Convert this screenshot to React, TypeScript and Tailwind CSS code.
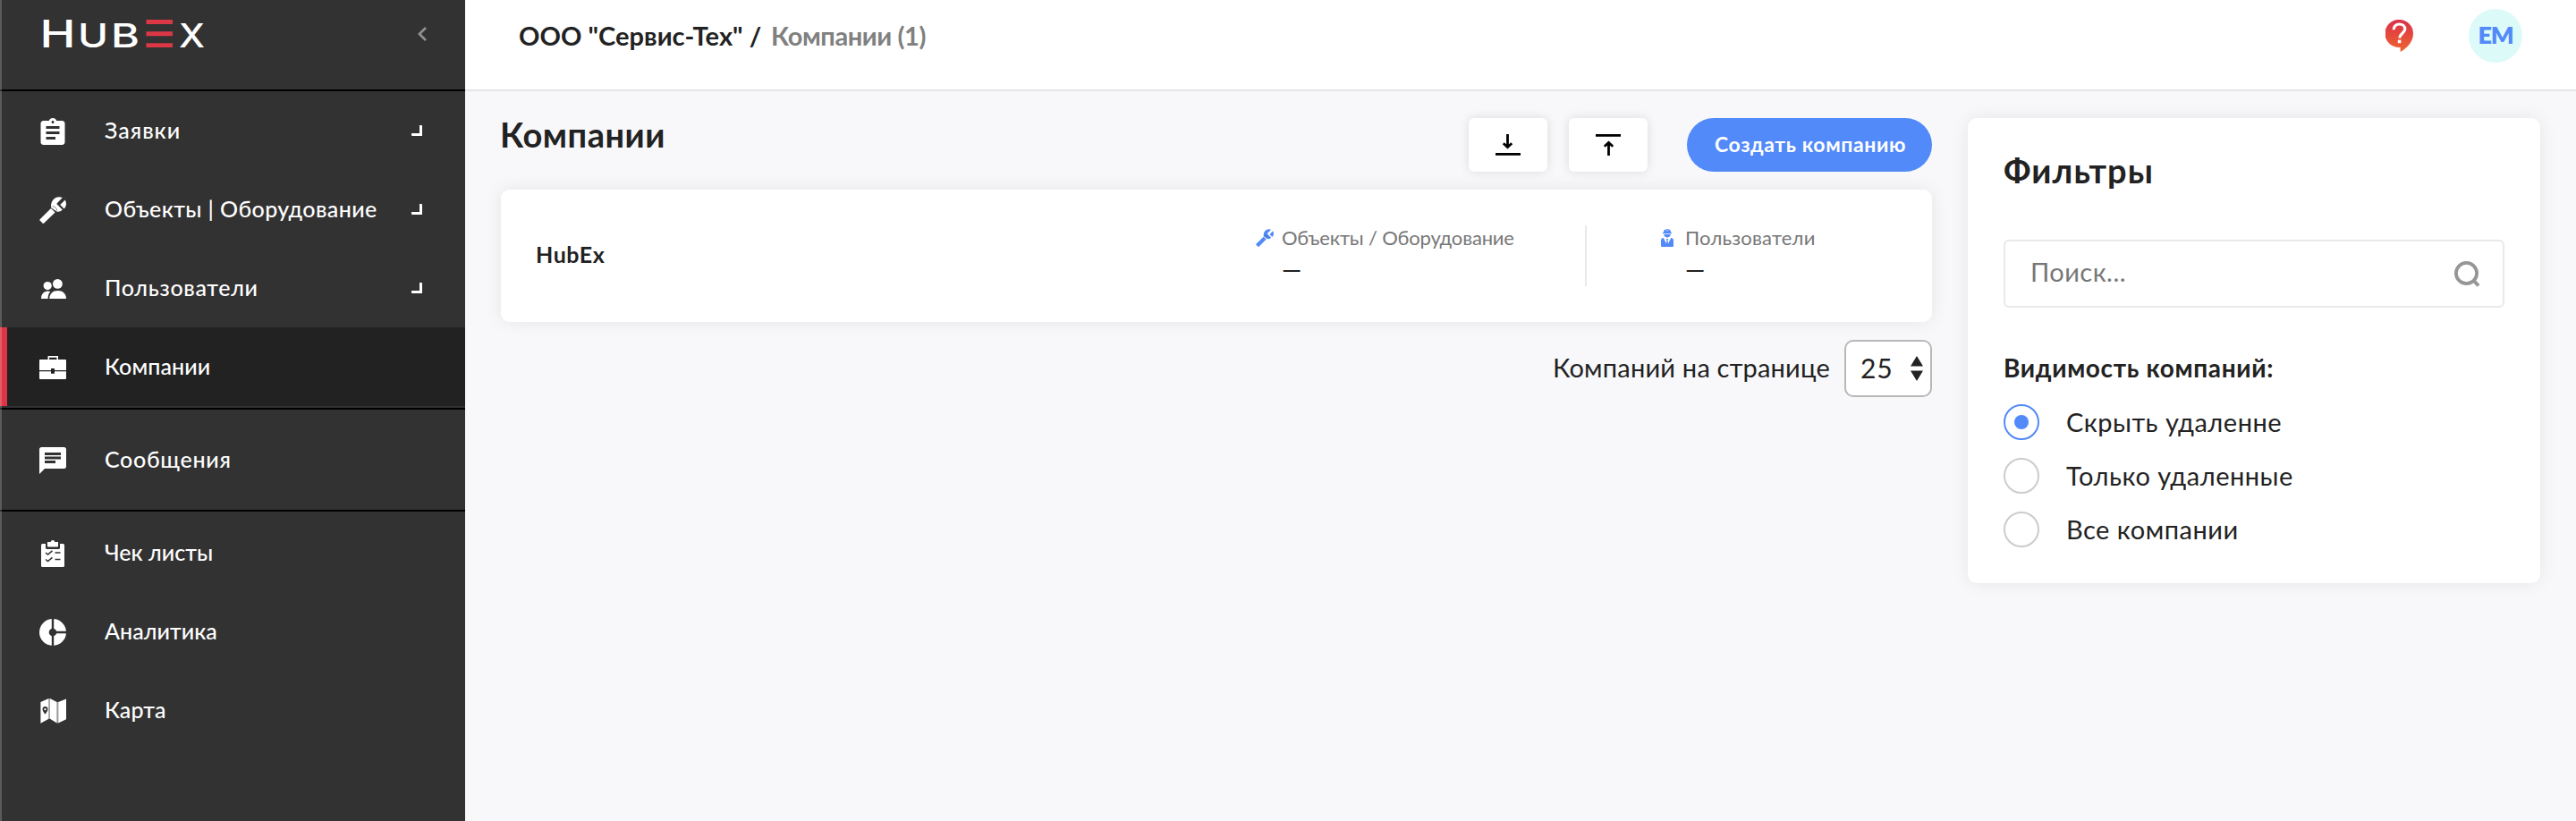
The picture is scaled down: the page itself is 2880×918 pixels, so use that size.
import React from 'react';

type IconProps = { className?: string };

const ClipboardIcon = () => (
  <svg className="size-[30px]" viewBox="2 1 20 20" fill="currentColor">
    <path d="M19 3h-4.180C14.400 1.840 13.300 1 12 1c-1.300 0-2.400.840-2.820 2H5c-1.100 0-2 .900-2 2v14c0 1.100.900 2 2 2h14c1.100 0 2-.900 2-2V5c0-1.100-.900-2-2-2zm-7 0c.550 0 1 .450 1 1s-.450 1-1 1-1-.450-1-1 .450-1 1-1zm2 14H7v-2h7v2zm3-4H7v-2h10v2zm0-4H7V7h10v2z" />
  </svg>
);

const WrenchIcon = ({ className = '' }: IconProps) => (
  <svg className={className} viewBox="0 0 30 30" fill="currentColor">
    <path d="M.6 25.2 13 13l4.600 4.400L5.200 29.500a1.200 1.200 0 0 1-1.700 0L.6 26.600a1 1 0 0 1 0-1.400z" />
    <path d="M13.200 12.200C12.200 5.600 16 .6 22 .2c1.600 0 2.800.3 3.800.800L19.800 7.200a1 1 0 0 0 0 1.400l6 6c-1.400 1.600-3.600 2.400-6 2.200z" />
    <path d="M28.800 3.400c1.800 3.400 1.600 7-1 10.200l-4.600-4.600z" />
    <path d="M14.600 10.600q4.400.4 5.200 5" fill="none" stroke="#323232" strokeOpacity=".7" strokeWidth=".8" />
  </svg>
);

const UsersIcon = () => (
  <svg className="size-[30px]" viewBox="0 0 30 30" fill="currentColor">
    <circle cx="20.400" cy="9.400" r="5.400" />
    <circle cx="9.200" cy="11.600" r="4.600" />
    <path d="M11.300 26c0-5.600 3.800-9 9.300-9s9.400 3.400 9.400 9z" />
    <path d="M2 26c0-5 3-8.500 7.500-8.500 1 0 2 .2 2.900.5-1.800 1.700-2.800 4.500-2.800 8z" />
  </svg>
);

const BriefcaseIcon = () => (
  <svg className="size-[30px]" viewBox="0 0 30 30" fill="currentColor">
    <path d="M10.300 6.500V2.900h9.900v3.600" fill="none" stroke="currentColor" strokeWidth="1.600" />
    <path d="M1 6h28a1 1 0 0 1 1 1v11H17v-2h-4v2H0V7a1 1 0 0 1 1-1z" />
    <path d="M0 19.200h13v2.600h4v-2.600h13V27a1 1 0 0 1-1 1H1a1 1 0 0 1-1-1z" />
  </svg>
);

const ChatIcon = () => (
  <svg className="size-[30px]" viewBox="2 2 20 20" fill="currentColor">
    <path d="M20.500 2h-17C2.700 2 2 2.700 2 3.500V22l4-4h14.500c.8 0 1.500-.7 1.500-1.500v-13c0-.8-.7-1.500-1.500-1.500zM6 9h12v2H6V9zm8 5H6v-2h8v2zm4-6H6V6h12v2z" />
  </svg>
);

const ChecklistIcon = () => (
  <svg className="size-[30px]" viewBox="0 0 30 30">
    <rect x="2" y="4" width="26" height="26" rx="1.500" fill="currentColor" />
    <path d="M7 3h16v5.500a1.500 1.500 0 0 1-1.500 1.500h-13A1.500 1.500 0 0 1 7 8.500z" fill="#323232" />
    <path d="M9 2h3.600Q13 0 15 0t2.400 2H21v4.600a1 1 0 0 1-1 1H10a1 1 0 0 1-1-1z" fill="currentColor" />
    <path d="M7 14l2.500 2 5-4.200M7 21.500l2.500 2 5-4.200M17.500 14h6M17.500 21.500h6" fill="none" stroke="#323232" strokeWidth="1.600" />
  </svg>
);

const PieIcon = () => (
  <svg className="size-[30px]" viewBox="0 0 30 30">
    <circle cx="15" cy="15" r="15" fill="currentColor" />
    <path d="M15 0v30M15 15h15" stroke="#323232" strokeWidth="2.400" />
    <circle cx="15" cy="15" r="4.300" fill="#323232" />
  </svg>
);

const MapIcon = () => (
  <svg className="size-[30px]" viewBox="0 0 30 30" fill="currentColor">
    <path d="M10.500 1.200 12 1v22.800l-1.500-.2zM19.600 5l1.600.2v23l-1.600.2z" fill="#9a9a9a" />
    <path d="M1.400 5l9.100-4v22.700l-9.100 5.100zM11.900 1l7.700 4v23.400l-7.700-4.600zM21.200 5 30 1.600v22.600l-8.800 4.200z" />
    <path d="M6.500 10a3 3 0 0 0-3 3c0 2.200 3 5.600 3 5.600s3-3.400 3-5.600a3 3 0 0 0-3-3zm0 1.900a1.200 1.200 0 1 1 0 2.400 1.200 1.200 0 0 1 0-2.400z" fill="#323232" />
  </svg>
);

const WorkerIcon = () => (
  <svg className="h-5 w-[14px]" viewBox="0 0 14 20" fill="#528af9">
    <path d="M5.800 0v2.600h.5V0h1.400v2.600h.5V0c1.900.6 3 2.200 3.100 4.200h.7v1H2v-1h.7C2.800 2.200 3.900.6 5.800 0z" />
    <path d="M3.200 6h7.600C10.500 8.200 9 9.600 7 9.600S3.500 8.200 3.200 6z" />
    <path d="M0 19V13c0-1.700 1-2.700 2.800-3L6 16.600l.5-4L5.800 11h2.400l-.7 1.600.5 4L11.200 10c1.800.3 2.800 1.300 2.800 3v6a1 1 0 0 1-1 1H1a1 1 0 0 1-1-1z" />
  </svg>
);

const HelpIcon = () => (
  <svg className="h-9 w-[31px]" viewBox="0 0 31 36">
    <defs>
      <linearGradient id="help" x1="0" y1="0" x2="0" y2="1">
        <stop offset="0" stopColor="#dc3048" />
        <stop offset="1" stopColor="#ee6630" />
      </linearGradient>
    </defs>
    <path d="M15.500 0A15.500 15.500 0 0 1 31 15.500C31 24 25 31.500 16.600 36v-5.100A15.500 15.500 0 1 1 15.500 0z" fill="url(#help)" />
    <path d="M9.200 11.200C9.200 7.400 12 5 15.500 5s6.300 2.300 6.300 5.600c0 4.300-6 5.100-6 9.800" fill="none" stroke="#fff" strokeWidth="3.200" />
    <rect x="13.800" y="22.600" width="3.600" height="3.600" fill="#fff" />
  </svg>
);

const Logo = () => (
  <svg className="h-[60px] w-[190px]" viewBox="-5 -14 190 60" fill="#fff" fontFamily="Inter, sans-serif" fontWeight="500">
    <text x="-3.500" y="31" fontSize="42.600" textLength="40" lengthAdjust="spacingAndGlyphs">H</text>
    <text x="39" y="30.800" fontSize="37" textLength="34" lengthAdjust="spacingAndGlyphs">U</text>
    <text x="76" y="31" fontSize="37" textLength="32" lengthAdjust="spacingAndGlyphs">B</text>
    <path d="M115.500 0H145v5h-29.500zM115.500 13.200H145v5h-29.500zM115.500 26.200H145v4.800h-29.500z" fill="#dc3745" />
    <text x="152" y="31" fontSize="37" textLength="29" lengthAdjust="spacingAndGlyphs">X</text>
  </svg>
);

type ItemProps = {
  icon: React.ReactNode;
  label: string;
  tracking: string;
  expandable?: boolean;
  active?: boolean;
};

function NavItem({ icon, label, tracking, expandable, active }: ItemProps) {
  return (
    <li className={`flex h-[88px] items-center pr-12 ${active ? 'border-l-8 border-[#dc3545] bg-[#222] pl-9' : 'pl-11'}`}>
      <span className="mt-[2px] shrink-0">{icon}</span>
      <span className={`ml-[43px] flex-1 whitespace-nowrap pb-[1px] text-[25px] font-medium ${tracking}`}>{label}</span>
      {expandable && <span className="size-[12px] rounded-[1px] border-b-[3px] border-r-[3px] border-white" />}
    </li>
  );
}

function Sidebar() {
  return (
    <aside className="relative flex w-[520px] shrink-0 flex-col bg-[#323232] text-white">
      <div className="flex h-[100px] items-start justify-between pl-[43px] pr-[43px] pt-2">
        <Logo />
        <svg className="mt-[22px] h-4 w-[10px]" viewBox="0 0 10 16" fill="none" stroke="#929292" strokeWidth="2.600">
          <path d="M9 1 1.900 8 9 15" />
        </svg>
      </div>
      <ul className="border-t-2 border-black pb-[2px]">
        <NavItem icon={<ClipboardIcon />} label="Заявки" tracking="tracking-[1px]" expandable />
        <NavItem icon={<WrenchIcon className="size-[30px]" />} label="Объекты | Оборудование" tracking="tracking-[0.42px]" expandable />
        <NavItem icon={<UsersIcon />} label="Пользователи" tracking="tracking-[0.7px]" expandable />
        <NavItem icon={<BriefcaseIcon />} label="Компании" tracking="tracking-[0.1px]" active />
      </ul>
      <ul className="border-y-2 border-black py-3">
        <NavItem icon={<ChatIcon />} label="Сообщения" tracking="tracking-[0.7px]" />
      </ul>
      <ul className="pt-[2px]">
        <NavItem icon={<ChecklistIcon />} label="Чек листы" tracking="tracking-[0.05px]" />
        <NavItem icon={<PieIcon />} label="Аналитика" tracking="tracking-[0.05px]" />
        <NavItem icon={<MapIcon />} label="Карта" tracking="tracking-[0.1px]" />
      </ul>
      <div className="absolute inset-y-0 left-0 w-[2px] bg-white/20" />
    </aside>
  );
}

function Header() {
  return (
    <header className="h-[102px] border-b-2 border-[#e5e5e5] bg-white pl-[60px] pr-[60px]">
      <div className="flex h-20 items-center">
        <div className="flex flex-1 whitespace-nowrap pb-[1px] text-[29px] font-bold">
          <span className="w-[282px] tracking-[0.05px]">ООО "Сервис-Тех" /</span>
          <span className="tracking-[-0.4px] text-[#808080]">Компании (1)</span>
        </div>
        <HelpIcon />
        <div className="ml-[62px] flex size-[60px] items-center justify-center rounded-full bg-[#dcfaf8] pb-[2px] text-[27px] font-extrabold tracking-[-1.2px] text-[#528af9]">
          EM
        </div>
      </div>
    </header>
  );
}

function IconButton({ up }: { up?: boolean }) {
  return (
    <button className="flex h-[60px] w-[88px] items-center justify-center rounded-[6px] bg-white shadow-[0_0_12px_rgba(0,0,0,0.12)]">
      <svg className="h-6 w-7" viewBox="0 0 28 24" fill="none" stroke="#000">
        {up ? (
          <>
            <path d="M0 1.400h28" strokeWidth="2.800" />
            <path d="M14.500 9.500V24M9.800 13.800l4.700-4.300 4.700 4.300" strokeWidth="2.800" />
          </>
        ) : (
          <>
            <path d="M0 22.400h28" strokeWidth="2.800" />
            <path d="M13.500 0v14.500M8.800 10.200l4.700 4.300 4.700-4.300" strokeWidth="2.800" />
          </>
        )}
      </svg>
    </button>
  );
}

function Filters() {
  const options = [
    { label: 'Скрыть удаленне', checked: true },
    { label: 'Только удаленные', checked: false },
    { label: 'Все компании', checked: false },
  ];
  return (
    <section className="h-[520px] w-[640px] rounded-[10px] bg-white px-10 pt-[38px] shadow-[0_0_20px_rgba(0,0,0,0.08)]">
      <h2 className="text-[38px] font-bold leading-[40px] tracking-[1.1px]">Фильтры</h2>
      <div className="mt-[58px] flex h-[76px] w-[560px] items-center justify-between rounded-[6px] border-2 border-[#e9e9e9] pl-[28px] pr-[25px]">
        <span className="pb-[5px] text-[29px] tracking-[0.45px] text-[#777]">Поиск...</span>
        <svg className="size-[29px]" viewBox="0 0 29 29" fill="none" stroke="#969696" strokeWidth="3.800">
          <circle cx="13.500" cy="13.500" r="11.600" />
          <path d="m21 21 6 6.500" strokeWidth="4" />
        </svg>
      </div>
      <h3 className="mt-[47px] text-[28px] font-bold leading-[40px] tracking-[0.65px]">Видимость компаний:</h3>
      <div className="mt-[21px] flex flex-col gap-5">
        {options.map((o) => (
          <label key={o.label} className="flex h-10 items-center">
            <span className={`flex size-10 items-center justify-center rounded-full border-2 ${o.checked ? 'border-[#528af9]' : 'border-[#ccc]'}`}>
              {o.checked && <span className="size-4 rounded-full bg-[#528af9]" />}
            </span>
            <span className="ml-[30px] pb-[1px] text-[29px] tracking-[0.5px]">{o.label}</span>
          </label>
        ))}
      </div>
    </section>
  );
}

export default function App() {
  return (
    <div className="flex h-[918px] w-[2880px] overflow-hidden bg-[#f8f8fb] font-[Lato,sans-serif] text-[#222]">
      <Sidebar />
      <div className="flex-1">
        <Header />
        <main className="flex gap-10 pl-10 pt-[30px]">
          <div className="w-[1600px]">
            <div className="flex h-[60px] items-start">
              <h1 className="-ml-[1px] flex-1 text-[38px] font-bold leading-[37px] tracking-[0.5px]">Компании</h1>
              <div className="flex gap-6">
                <IconButton />
                <IconButton up />
              </div>
              <button className="ml-11 h-[60px] w-[274px] rounded-full bg-[#528af9] pb-[2px] pl-[2px] text-[23px] font-bold tracking-[0.6px] text-white">
                Создать компанию
              </button>
            </div>
            <article className="mt-5 flex h-[148px] items-center rounded-[10px] bg-white pl-[39px] shadow-[0_0_20px_rgba(0,0,0,0.08)]">
              <h4 className="w-[805px] pb-[3px] text-[25px] font-bold tracking-[0.6px]">HubEx</h4>
              <div className="flex h-[68px] w-[370px] border-r-2 border-[#e9e9e9]">
                <WrenchIcon className="mt-1 size-5 shrink-0 text-[#528af9]" />
                <div className="ml-[9px]">
                  <p className="whitespace-nowrap text-[22px] leading-[28px] tracking-[-0.17px] text-[#777]">Объекты / Оборудование</p>
                  <p className="mt-[7px] text-[28px] font-medium leading-[28px]">—</p>
                </div>
              </div>
              <div className="flex h-[68px] pl-[83px]">
                <span className="mt-1">
                  <WorkerIcon />
                </span>
                <div className="ml-[13px]">
                  <p className="text-[22px] leading-[28px] tracking-[0.2px] text-[#777]">Пользователи</p>
                  <p className="mt-[7px] text-[28px] font-medium leading-[28px]">—</p>
                </div>
              </div>
            </article>
            <div className="mt-5 flex h-16 items-center justify-end">
              <span className="pb-[2px] text-[29px] tracking-[0.2px]">Компаний на странице</span>
              <div className="ml-4 flex h-16 w-[98px] items-center justify-between rounded-[10px] border-2 border-[#b8b8b8] bg-white pl-[16px] pr-[8px]">
                <span className="pb-[2px] text-[30px] tracking-[0.8px]">25</span>
                <svg className="h-[28px] w-[14px]" viewBox="0 0 14 28" fill="#222">
                  <path d="M7 0l7 11.500H0zM7 28l7-11.500H0z" />
                </svg>
              </div>
            </div>
          </div>
          <Filters />
        </main>
      </div>
    </div>
  );
}
